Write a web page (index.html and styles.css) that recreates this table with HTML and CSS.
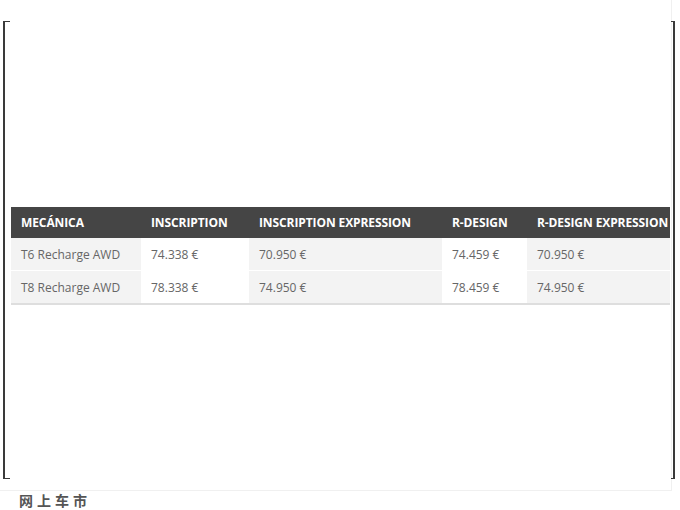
FILE: index.html
```html
<!DOCTYPE html>
<html>
<head>
<title>Precios Volvo Recharge</title>
<link rel="stylesheet" href="styles.css">
</head>
<body>

<div class="page">
    <div class="frame">
        <div class="bracketLeft"></div>
        <div class="frameBody">
            <table class="priceTable">
                <tr>
                    <th class="colA">MECÁNICA</th>
                    <th class="colB">INSCRIPTION</th>
                    <th class="colC">INSCRIPTION EXPRESSION</th>
                    <th class="colD">R-DESIGN</th>
                    <th class="colE">R-DESIGN EXPRESSION</th>
                </tr>
                <tr>
                    <td class="grey">T6 Recharge AWD</td>
                    <td>74.338 €</td>
                    <td class="grey">70.950 €</td>
                    <td>74.459 €</td>
                    <td class="grey">70.950 €</td>
                </tr>
                <tr class="lastRow">
                    <td class="grey">T8 Recharge AWD</td>
                    <td>78.338 €</td>
                    <td class="grey">74.950 €</td>
                    <td>78.459 €</td>
                    <td class="grey">74.950 €</td>
                </tr>
            </table>
        </div>
        <div class="bracketRight"></div>
    </div>
</div>

<div class="source">网上车市</div>

</body>
</html>
```

FILE: styles.css
```css
body{
    margin:0;
    background:#ffffff;
    font-family:"Open Sans", "Noto Sans", sans-serif;
}
.page{
    width:668px;
    height:469px;
    padding:21px 0 0 3px;
    border-right:1px solid #f0f0f0;
    border-bottom:1px solid #f0f0f0;
}
.frame{
    display:flex;
    height:458px;
    width:672px;
}
.bracketLeft{
    width:5px;
    border-left:2px solid #3a3a3a;
    border-top:1px solid #3a3a3a;
    border-bottom:1px solid #3a3a3a;
    flex-shrink:0;
}
.bracketRight{
    width:2px;
    border-right:2px solid #3a3a3a;
    border-top:1px solid #3a3a3a;
    border-bottom:1px solid #3a3a3a;
    flex-shrink:0;
}
.frameBody{
    flex:1;
    padding:186px 1px 0 1px;
}
.priceTable{
    border-collapse:collapse;
    width:659px;
    font-size:12px;
}
.priceTable th{
    background:#454545;
    color:#ffffff;
    font-weight:bold;
    text-align:left;
    height:31px;
    padding:0 0 0 10px;
    white-space:nowrap;
    letter-spacing:-0.1px;
}
.priceTable td{
    color:#666666;
    height:32px;
    padding:0 0 0 10px;
    border-bottom:1px solid #ffffff;
    background:#ffffff;
}
.priceTable td.grey{
    background:#f3f3f3;
}
.priceTable .lastRow td{
    border-bottom:2px solid #dedede;
}
.colA{
    width:120px;
}
.colB{
    width:98px;
}
.colC{
    width:183px;
}
.colD{
    width:75px;
}
.colE{
    width:133px;
}
.source{
    margin:1px 0 0 19px;
    font-family:"Noto Sans CJK SC", sans-serif;
    font-size:14px;
    font-weight:bold;
    color:#555555;
    letter-spacing:4px;
    line-height:16px;
}
```
